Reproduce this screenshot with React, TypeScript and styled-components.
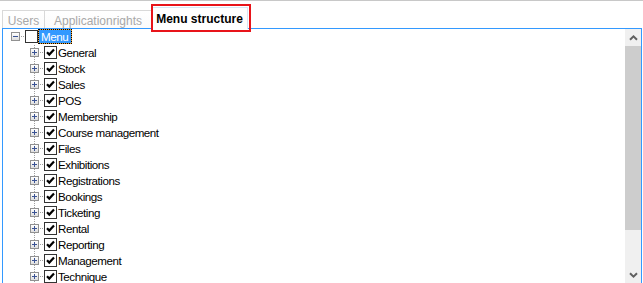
import React from "react";
import styled, { createGlobalStyle, css } from "styled-components";

const Global = createGlobalStyle`
  html, body { margin: 0; padding: 0; background: #fff; }
  body { font-family: "Liberation Sans", Arial, sans-serif; }
`;

const Page = styled.div`
  position: relative;
  width: 643px;
  height: 283px;
  overflow: hidden;
  border-top: 1px solid #c8c8c8;
  box-sizing: border-box;
  background: #fff;
`;

const TabStrip = styled.div`
  display: flex;
  align-items: flex-end;
  height: 27px;
  padding-left: 2px;
`;

const Tab = styled.div<{ $active?: boolean; $w: number }>`
  box-sizing: border-box;
  width: ${(p) => p.$w}px;
  display: flex;
  align-items: center;
  justify-content: center;
  font-size: 12px;
  border: 1px solid #d9d9d9;
  border-bottom: none;
  background: linear-gradient(#ffffff, #fbfbfb);
  ${(p) =>
    p.$active
      ? css`
          position: relative;
          z-index: 1;
          height: 22px;
          margin-bottom: -1px;
          margin-left: 2px;
          padding-top: 1px;
          font-weight: bold;
          color: #000;
          background: #fff;
          border-color: #d6e6f6;
        `
      : css`
          height: 18px;
          padding-top: 2px;
          color: #a8a8a8;
          & + & {
            margin-left: -1px;
          }
        `}
`;

const Highlight = styled.div`
  position: absolute;
  left: 151px;
  top: 3px;
  width: 100px;
  height: 28px;
  box-sizing: border-box;
  border: 2px solid #e8141a;
  z-index: 2;
  pointer-events: none;
`;

const Panel = styled.div`
  box-sizing: border-box;
  margin-left: 2px;
  width: 640px;
  height: 256px;
  border: 1px solid #3399ff;
  display: flex;
`;

const Tree = styled.div`
  flex: 1;
  padding-left: 3px;
  overflow: hidden;
`;

const Row = styled.div<{ $level: number }>`
  display: flex;
  align-items: center;
  height: 16px;
  padding-left: ${(p) => p.$level * 19}px;
`;

const dot = "#a0a0a0";

const Expander = styled.span<{ $vLine: "none" | "full" | "top" }>`
  flex: none;
  width: 19px;
  height: 16px;
  display: flex;
  align-items: center;
  background-repeat: no-repeat;
  background-image: repeating-linear-gradient(to right, ${dot} 0 1px, transparent 1px 2px)
    ${(p) =>
      p.$vLine !== "none"
        ? `, repeating-linear-gradient(to bottom, ${dot} 0 1px, transparent 1px 2px)`
        : ""};
  background-size: 10px 1px ${(p) => (p.$vLine === "full" ? ", 1px 16px" : p.$vLine === "top" ? ", 1px 8px" : "")};
  background-position: 9px 7px ${(p) => (p.$vLine !== "none" ? ", 9px 0" : "")};
`;

const ToggleBox = styled.span`
  box-sizing: border-box;
  width: 9px;
  height: 9px;
  margin-left: 5px;
  margin-top: -2px;
  border: 1px solid #919191;
  background: linear-gradient(#ffffff, #dedede);
  display: flex;
  align-items: center;
  justify-content: center;
`;

const CheckBox = styled.span`
  box-sizing: border-box;
  flex: none;
  width: 13px;
  height: 13px;
  margin-top: -2px;
  border: 1px solid #333;
  background: #fff;
  display: flex;
  align-items: center;
  justify-content: center;
`;

const Label = styled.span<{ $selected?: boolean }>`
  box-sizing: border-box;
  height: 15px;
  line-height: 13px;
  padding: 0 1px 0 0;
  margin-top: -1px;
  font-size: 11.6px;
  letter-spacing: -0.45px;
  white-space: nowrap;
  color: #000;
  border: 1px solid transparent;
  ${(p) =>
    p.$selected &&
    css`
      color: #fff;
      padding: 0 3px 0 2px;
      border: 1px dotted #000;
      background: linear-gradient(#3399ff, #3399ff) padding-box, #f0a030 border-box;
    `}
`;

const Scrollbar = styled.div`
  flex: none;
  width: 16px;
  display: flex;
  flex-direction: column;
  background: #f0f0f0;
`;

const ScrollButton = styled.div`
  height: 17px;
  flex: none;
  display: flex;
  align-items: center;
  justify-content: center;
`;

const Thumb = styled.div<{ $h: number }>`
  flex: none;
  height: ${(p) => p.$h}px;
  background: #cdcdcd;
`;

const Track = styled.div`
  flex: 1;
`;

const Plus = () => (
  <svg width="7" height="7" viewBox="0 0 7 7">
    <path d="M1 3.5H6M3.5 1V6" stroke="#3a5394" strokeWidth="1" />
  </svg>
);

const Minus = () => (
  <svg width="7" height="7" viewBox="0 0 7 7">
    <path d="M1 3.5H6" stroke="#3a5394" strokeWidth="1" />
  </svg>
);

const Check = () => (
  <svg width="11" height="11" viewBox="0 0 11 11">
    <path d="M2 5.2L4.3 7.6L9 2.6" fill="none" stroke="#000" strokeWidth="2.2" />
  </svg>
);

const Chevron = ({ down }: { down?: boolean }) => (
  <svg width="9" height="6" viewBox="0 0 9 6">
    <path
      d={down ? "M1 1.2L4.5 4.6L8 1.2" : "M1 4.8L4.5 1.4L8 4.8"}
      fill="none"
      stroke="#606060"
      strokeWidth="2"
    />
  </svg>
);

const items = [
  "General",
  "Stock",
  "Sales",
  "POS",
  "Membership",
  "Course management",
  "Files",
  "Exhibitions",
  "Registrations",
  "Bookings",
  "Ticketing",
  "Rental",
  "Reporting",
  "Management",
  "Technique",
];

export default function App() {
  return (
    <>
      <Global />
      <Page>
        <TabStrip>
          <Tab $w={43}>Users</Tab>
          <Tab $w={108}>Applicationrights</Tab>
          <Tab $w={97} $active>
            Menu structure
          </Tab>
        </TabStrip>
        <Highlight />
        <Panel>
          <Tree>
            <Row $level={0}>
              <Expander $vLine="none">
                <ToggleBox>
                  <Minus />
                </ToggleBox>
              </Expander>
              <CheckBox />
              <Label $selected>Menu</Label>
            </Row>
            {items.map((name) => (
              <Row $level={1} key={name}>
                <Expander $vLine="full">
                  <ToggleBox>
                    <Plus />
                  </ToggleBox>
                </Expander>
                <CheckBox>
                  <Check />
                </CheckBox>
                <Label>{name}</Label>
              </Row>
            ))}
          </Tree>
          <Scrollbar>
            <ScrollButton>
              <Chevron />
            </ScrollButton>
            <Thumb $h={184} />
            <Track />
            <ScrollButton>
              <Chevron down />
            </ScrollButton>
          </Scrollbar>
        </Panel>
      </Page>
    </>
  );
}
